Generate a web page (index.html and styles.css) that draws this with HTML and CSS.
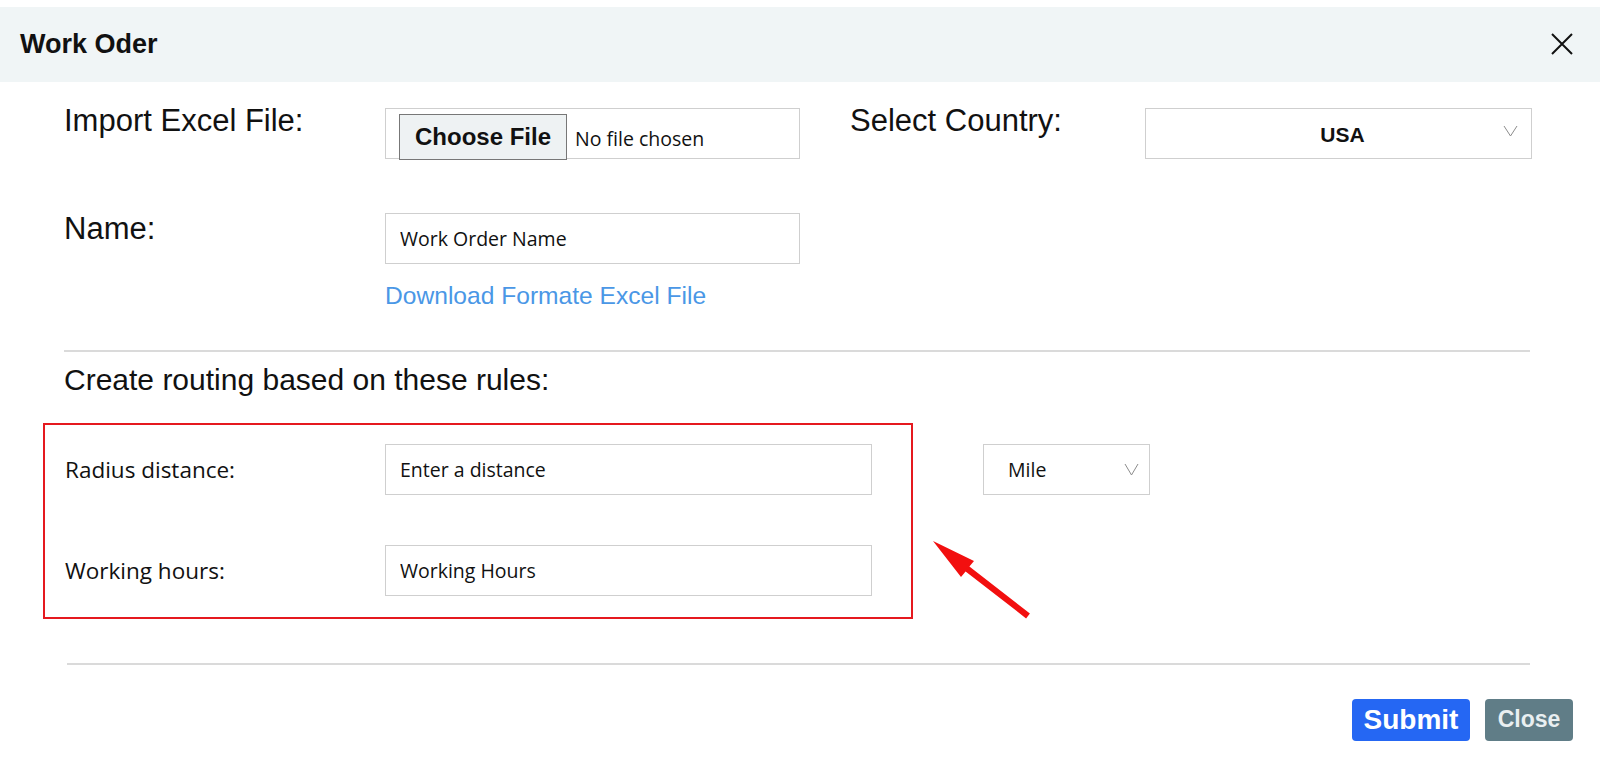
FILE: index.html
```html
<!DOCTYPE html>
<html lang="en">
<head>
    <meta charset="UTF-8">
    <meta name="viewport" content="width=device-width, initial-scale=1.0">
    <title>Work Oder</title>
    <link rel="stylesheet" href="styles.css">
</head>
<body>
    <div class="modal">
        <div class="modal-header">
            <h2>Work Oder</h2>
            <button class="close-x" type="button" aria-label="Close">
                <svg width="22" height="22" viewBox="0 0 22 22"><path d="M1 1 L21 21 M21 1 L1 21" stroke="#111" stroke-width="2" fill="none"/></svg>
            </button>
        </div>

        <div class="modal-body">
            <div class="top-grid">
                <label class="big-label">Import Excel File:</label>
                <div class="file-box">
                    <button type="button" class="file-btn">Choose File</button>
                    <span class="file-name">No file chosen</span>
                </div>
                <label class="big-label country-label">Select Country:</label>
                <div class="select select-country">
                    <span>USA</span>
                    <svg width="15" height="12" viewBox="0 0 15 12"><path d="M1 1 L7.5 11 L14 1" stroke="#8c8c8c" stroke-width="1" fill="none"/></svg>
                </div>

                <label class="big-label">Name:</label>
                <div class="name-col">
                    <input type="text" class="field" placeholder="Work Order Name">
                    <a href="#" class="download-link">Download Formate Excel File</a>
                </div>
            </div>

            <hr class="divider">

            <h3 class="rules-title">Create routing based on these rules:</h3>

            <div class="rules-row">
                <div class="rules-box">
                    <label class="small-label">Radius distance:</label>
                    <input type="text" class="field" placeholder="Enter a distance">
                    <label class="small-label">Working hours:</label>
                    <input type="text" class="field" placeholder="Working Hours">
                </div>
                <div class="select select-unit">
                    <span>Mile</span>
                    <svg width="15" height="13" viewBox="0 0 15 13"><path d="M1 1 L7.5 12 L14 1" stroke="#8c8c8c" stroke-width="1" fill="none"/></svg>
                </div>
                <svg class="arrow" width="110" height="92" viewBox="0 0 110 92">
                    <polygon points="8,9 49,29 44.4,34.6 104.9,81.6 101.1,86.4 40.6,39.4 36,45" fill="#f20f0f"/>
                </svg>
            </div>

            <hr class="divider divider-bottom">

            <div class="modal-footer">
                <button type="button" class="btn btn-submit">Submit</button>
                <button type="button" class="btn btn-close">Close</button>
            </div>
        </div>
    </div>
</body>
</html>
```

FILE: styles.css
```css
* {
    margin: 0;
    padding: 0;
    box-sizing: border-box;
}

body {
    background: #ffffff;
    font-family: "Liberation Sans", Arial, sans-serif;
    color: #111111;
}

.modal {
    width: 1600px;
    height: 775px;
    overflow: hidden;
}

.modal-header {
    margin-top: 7px;
    height: 75px;
    background: #f0f5f6;
    display: flex;
    align-items: center;
    justify-content: space-between;
    padding: 0 27px 0 20px;
}

.modal-header h2 {
    font-size: 27px;
    font-weight: bold;
    line-height: 1;
}

.close-x {
    border: none;
    background: none;
    width: 22px;
    height: 22px;
    display: flex;
    margin-top: -2px;
}

.modal-body {
    padding: 23px 70px 0 64px;
}

.top-grid {
    display: grid;
    grid-template-columns: 321px 415px 345px 387px;
    row-gap: 54px;
    align-items: start;
}

.big-label {
    font-size: 31px;
    line-height: 1;
}

.country-label {
    margin-left: 50px;
}

.top-grid .file-box,
.top-grid .select-country {
    margin-top: 3px;
}

.file-box {
    height: 51px;
    border: 1px solid #cfcfcf;
    display: flex;
    align-items: flex-start;
    padding: 5px 0 0 13px;
}

.file-btn {
    height: 46px;
    width: 168px;
    margin-bottom: -1px;
    border: 1px solid #777777;
    background: #eef2f3;
    font-family: "Liberation Sans", Arial, sans-serif;
    font-weight: bold;
    font-size: 24px;
    color: #111111;
}

.file-name {
    align-self: center;
    margin-top: 4px;
    margin-left: 8px;
    font-family: "Open Sans", sans-serif;
    font-size: 19.5px;
    color: #111111;
}

.select {
    height: 51px;
    border: 1px solid #cfcfcf;
    display: flex;
    align-items: center;
    background: #ffffff;
}

.select-country {
    grid-column: 4;
    padding: 0 13px 0 36px;
}

.select-country span {
    flex: 1;
    text-align: center;
    font-weight: bold;
    font-size: 21px;
    margin-top: 2px;
}

.select-country svg {
    margin-top: -6px;
}

.name-col {
    grid-column: 2;
    display: flex;
    flex-direction: column;
}

.field {
    height: 51px;
    width: 100%;
    border: 1px solid #cfcfcf;
    padding: 0 14px;
    font-family: "Open Sans", sans-serif;
    font-size: 19.5px;
    color: #111111;
    outline: none;
}

.field::placeholder {
    color: #111111;
    opacity: 1;
}

.download-link {
    margin-top: 20px;
    font-size: 24.6px;
    line-height: 1;
    color: #4a97e6;
    text-decoration: none;
}

.divider {
    border: none;
    border-top: 2px solid #dadada;
    margin-top: 41px;
}

.rules-title {
    margin-top: 13px;
    font-size: 30px;
    font-weight: normal;
    line-height: 1;
}

.rules-row {
    position: relative;
    display: flex;
    align-items: flex-start;
    margin-top: 28px;
}

.rules-box {
    margin-left: -21px;
    width: 870px;
    border: 2px solid #e5191f;
    padding: 19px 0 21px 20px;
    display: grid;
    grid-template-columns: 320px 487px;
    row-gap: 50px;
    align-items: center;
}

.small-label {
    font-family: "Open Sans", sans-serif;
    font-size: 22.5px;
    color: #111111;
}

.select-unit {
    margin-top: 21px;
    margin-left: 70px;
    width: 167px;
    padding: 0 10px 0 24px;
}

.select-unit span {
    flex: 1;
    font-family: "Open Sans", sans-serif;
    font-size: 19.5px;
}

.arrow {
    position: absolute;
    left: 861px;
    top: 109px;
}

.divider-bottom {
    margin-top: 44px;
    margin-left: 3px;
}

.modal-footer {
    display: flex;
    justify-content: flex-end;
    gap: 15px;
    margin-top: 34px;
    margin-right: -43px;
}

.btn {
    height: 42px;
    border: none;
    border-radius: 4px;
    font-family: "Liberation Sans", Arial, sans-serif;
    font-weight: bold;
    cursor: pointer;
}

.btn-submit {
    width: 118px;
    background: #2567f3;
    color: #ffffff;
    font-size: 28px;
}

.btn-close {
    width: 88px;
    background: #607d87;
    color: #e9eff1;
    font-size: 23px;
}
```
